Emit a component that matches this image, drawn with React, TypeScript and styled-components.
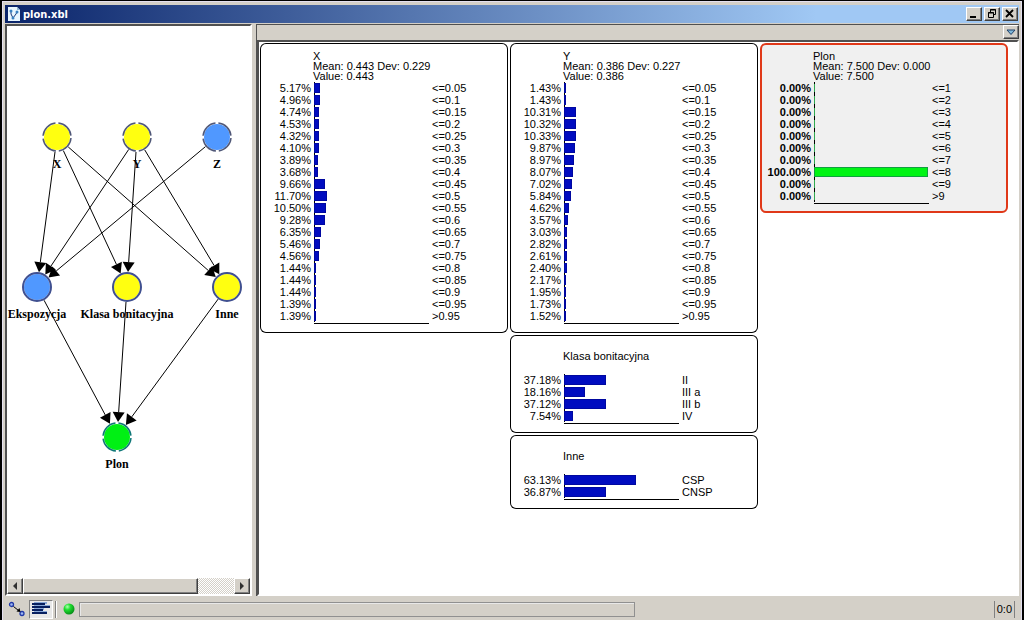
import React from "react";
import styled, { createGlobalStyle, css } from "styled-components";

const Global = createGlobalStyle`
  * { box-sizing: border-box; }
  body { margin: 0; background: #000; font-family: "Liberation Sans", Arial, sans-serif; font-size: 11px; color: #000; }
  button { font: inherit; color: inherit; padding: 0; margin: 0; }
`;

const raised = css`
  background: #d4d0c8;
  border: 1px solid;
  border-color: #fff #404040 #404040 #fff;
  box-shadow: inset -1px -1px 0 #808080;
`;

const Frame = styled.div`
  display: flex;
  flex-direction: column;
  min-height: 100vh;
  border: solid #000;
  border-width: 1px 2px 0;
`;

const Window = styled.div`
  flex: 1;
  display: flex;
  flex-direction: column;
  background: #d4d0c8;
  border: 1px solid #e4e0f0;
  border-bottom: 0;
  padding: 3px 2px 0;
`;

const TitleBar = styled.header`
  display: flex;
  align-items: center;
  height: 18px;
  padding: 0 1px 0 2px;
  gap: 2px;
  background: linear-gradient(to right, #0a246a, #a0c8f4 80%);
`;

const Title = styled.h1`
  flex: 1;
  margin: 0;
  color: #fff;
  font: bold 11px/16px "DejaVu Sans Condensed", "Noto Sans", sans-serif;
  padding-top: 2px;
`;

const Caption = styled.div`
  display: flex;
  gap: 2px;
`;

const CaptionButton = styled.button`
  ${raised}
  width: 16px;
  height: 14px;
  display: grid;
  place-items: center;
`;

const Body = styled.main`
  flex: 1;
  display: flex;
  gap: 4px;
  margin-top: 1px;
`;

const Sunken = css`
  border: solid;
  border-width: 2px;
  border-color: #505050 #fff #fff #505050;
`;

const NetworkPane = styled.section`
  ${Sunken}
  width: 247px;
  display: flex;
  flex-direction: column;
  background: #fff;
`;

const Canvas = styled.svg`
  flex: 1;
  display: block;
  width: 243px;
  min-height: 450px;
`;

const NodeLabel = styled.text`
  font: bold 12px "Liberation Serif", "Times New Roman", serif;
  text-anchor: middle;
`;

const ScrollBar = styled.div`
  display: flex;
  height: 16px;
  background: repeating-conic-gradient(#fff 0 25%, #d4d0c8 0 50%) 0 0 / 2px 2px;
`;

const ScrollButton = styled.button`
  ${raised}
  width: 16px;
  display: grid;
  place-items: center;
`;

const ScrollThumb = styled.div`
  ${raised}
  width: 175px;
`;

const ScrollTrack = styled.div`
  flex: 1;
`;

const MonitorPane = styled.section`
  flex: 1;
  min-width: 0;
  display: flex;
  flex-direction: column;
  border-left: 1px solid #505050;
  border-top: 1px solid #505050;
`;

const MonitorBar = styled.div`
  display: flex;
  justify-content: flex-end;
  height: 15px;
`;

const MenuButton = styled.button`
  ${raised}
  width: 16px;
  height: 14px;
  display: grid;
  place-items: center;
`;

const Monitors = styled.div`
  ${Sunken}
  flex: 1;
  display: flex;
  align-items: flex-start;
  gap: 2px;
  padding: 1px;
  background: #fff;
`;

const Column = styled.div`
  display: flex;
  flex-direction: column;
  gap: 2px;
`;

const Card = styled.article<{ $evidence?: boolean }>`
  width: 248px;
  padding: 8px 0 11px;
  border-radius: 6px;
  background: ${(p) => (p.$evidence ? "#f0f0f0" : "#fff")};
  box-shadow: inset 0 0 0 ${(p) => (p.$evidence ? "2px #e03818" : "1px #000")};
`;

const CardHeader = styled.header<{ $single: boolean }>`
  display: flex;
  flex-direction: column;
  justify-content: center;
  height: 31px;
  padding: 0 0 ${(p) => (p.$single ? 5 : 1)}px 53px;
  line-height: 10px;
`;

const CardTitle = styled.h2`
  margin: 0;
  font: inherit;
`;

const Table = styled.table`
  width: 100%;
  table-layout: fixed;
  border-collapse: collapse;
`;

const Row = styled.tr`
  height: 12px;
`;

const Percent = styled.td<{ $bold?: boolean }>`
  width: 54px;
  padding: 0 3px 0 0;
  text-align: right;
  line-height: 12px;
  font-weight: ${(p) => (p.$bold ? "bold" : "normal")};
`;

const BarCell = styled.td`
  width: 115px;
  padding: 0;
`;

const State = styled.th`
  padding: 0 0 0 3px;
  text-align: left;
  font-weight: normal;
  line-height: 12px;
`;

const Plot = styled.div<{ $green?: boolean; $last: boolean }>`
  height: 12px;
  padding: 1px 0;
  background: linear-gradient(${(p) => (p.$green ? "#000 0 2px, #30a850 2px 10px, #000 10px" : "#000, #000")}) 0 0 / 1px 100% no-repeat;
  box-shadow: ${(p) => (p.$last ? `0 1px 0 ${p.$green ? "#f0f0f0" : "#fff"}, 0 2px 0 #000` : "none")};
`;

const Bar = styled.div<{ $green?: boolean }>`
  height: 10px;
  background: ${(p) => (p.$green ? "#00f414" : "#000cc0")};
  border: 1px solid ${(p) => (p.$green ? "#10a040" : "#0008a0")};
`;

const StatusBar = styled.footer`
  display: flex;
  align-items: center;
  height: 24px;
  margin-top: 1px;
`;

const ToolButton = styled.button<{ $pressed?: boolean }>`
  width: 24px;
  height: 19px;
  display: grid;
  place-items: center;
  border: 1px solid;
  border-color: ${(p) => (p.$pressed ? "#808080 #fff #fff #808080" : "transparent")};
  background: ${(p) => (p.$pressed ? "#e8e8e8" : "transparent")};
`;

const Divider = styled.div`
  width: 2px;
  height: 17px;
  margin: 0 6px 0 2px;
  border-left: 1px solid #808080;
  border-right: 1px solid #fff;
`;

const Message = styled.output`
  flex: 0 1 556px;
  height: 15px;
  margin-left: 4px;
  border: 1px solid #909090;
  box-shadow: inset 1px 1px 0 #e8e8e8;
`;

const Position = styled.output`
  height: 17px;
  margin: 0 4px 0 auto;
  padding: 0 2px;
  border: solid #808080;
  border-width: 0 1px;
  line-height: 17px;
`;

type Point = { id: string; x: number; y: number; color: string; dashed?: boolean };

const nodes: Point[] = [
  { id: "X", x: 57, y: 137, color: "#ffff10", dashed: true },
  { id: "Y", x: 137, y: 137, color: "#ffff10", dashed: true },
  { id: "Z", x: 217, y: 137, color: "#5098ff", dashed: true },
  { id: "Ekspozycja", x: 37, y: 287, color: "#5098ff" },
  { id: "Klasa bonitacyjna", x: 127, y: 287, color: "#ffff10" },
  { id: "Inne", x: 227, y: 287, color: "#ffff10" },
  { id: "Plon", x: 117, y: 437, color: "#00f014", dashed: true },
];

const edges: [number, number][] = [
  [0, 3], [0, 4], [0, 5], [1, 3], [1, 4], [1, 5], [2, 3], [3, 6], [4, 6], [5, 6],
];

function Edge({ from, to }: { from: Point; to: Point }) {
  const dx = to.x - from.x;
  const dy = to.y - from.y;
  const len = Math.hypot(dx, dy);
  const ux = dx / len;
  const uy = dy / len;
  const tx = to.x - ux * 15;
  const ty = to.y - uy * 15;
  const bx = tx - ux * 10;
  const by = ty - uy * 10;
  return (
    <g>
      <line x1={from.x + ux * 15} y1={from.y + uy * 15} x2={bx} y2={by} stroke="#000" />
      <polygon points={`${tx},${ty} ${bx - uy * 6},${by + ux * 6} ${bx + uy * 6},${by - ux * 6}`} />
    </g>
  );
}

function Network() {
  return (
    <Canvas viewBox="7 26 243 552" preserveAspectRatio="xMinYMin slice" role="img" aria-label="Network">
      {nodes.map((n) => (
        <NodeLabel key={n.id} x={n.x} y={n.y + 31}>{n.id}</NodeLabel>
      ))}
      {edges.map(([a, b]) => (
        <Edge key={`${a}-${b}`} from={nodes[a]} to={nodes[b]} />
      ))}
      {nodes.map((n) => (
        <g key={n.id}>
          <circle cx={n.x} cy={n.y} r={13} fill={n.color} />
          <circle
            cx={n.x}
            cy={n.y}
            r={14}
            fill="none"
            stroke={n.id === "Plon" ? "#107878" : n.dashed ? "#505878" : "#405090"}
            strokeWidth={n.dashed ? 1.5 : 2}
            strokeDasharray={n.dashed ? "18.99 3" : undefined}
            strokeDashoffset={-1}
          />
        </g>
      ))}
    </Canvas>
  );
}

type Item = [number, string];

function Monitor({ name, stats, items, evidence }: { name: string; stats?: [string, string]; items: Item[]; evidence?: boolean }) {
  return (
    <Card $evidence={evidence}>
      <CardHeader $single={!stats}>
        <CardTitle>{name}</CardTitle>
        {stats?.map((s) => <div key={s}>{s}</div>)}
      </CardHeader>
      <Table aria-label={name}>
        <tbody>
          {items.map(([p, label], i) => (
            <Row key={label}>
              <Percent $bold={evidence}>{p.toFixed(2)}%</Percent>
              <BarCell>
                <Plot $green={evidence} $last={i === items.length - 1}>
                  {p > 0 && <Bar $green={evidence} style={{ width: Math.round(p * 1.14) }} />}
                </Plot>
              </BarCell>
              <State scope="row">{label}</State>
            </Row>
          ))}
        </tbody>
      </Table>
    </Card>
  );
}

const bins = Array.from({ length: 20 }, (_, i) => (i === 19 ? ">0.95" : `<=${(i + 1) * 5 / 100}`));
const withBins = (values: number[]): Item[] => values.map((v, i) => [v, bins[i]]);

const xItems = withBins([5.17, 4.96, 4.74, 4.53, 4.32, 4.1, 3.89, 3.68, 9.66, 11.7, 10.5, 9.28, 6.35, 5.46, 4.56, 1.44, 1.44, 1.44, 1.39, 1.39]);
const yItems = withBins([1.43, 1.43, 10.31, 10.32, 10.33, 9.87, 8.97, 8.07, 7.02, 5.84, 4.62, 3.57, 3.03, 2.82, 2.61, 2.4, 2.17, 1.95, 1.73, 1.52]);
const plonItems: Item[] = Array.from({ length: 10 }, (_, i) => [i === 7 ? 100 : 0, i === 9 ? ">9" : `<=${i + 1}`]);

export default function App() {
  return (
    <Frame>
      <Global />
      <Window>
        <TitleBar>
          <svg width="14" height="16" viewBox="0 0 14 16" aria-hidden="true">
            <path d="M1 1h9l3 3v11H1z" fill="#e8f6ff" />
            <path d="M10 1v3h3" fill="#90b8d8" />
            <path d="M4 5v3l2 4 3-4 1-2" fill="none" stroke="#183878" />
            <circle cx="4" cy="5" r="1.5" fill="#3880c0" />
            <circle cx="10" cy="6" r="1.5" fill="#3880c0" />
            <circle cx="6" cy="12" r="1.5" fill="#3880c0" />
          </svg>
          <Title>plon.xbl</Title>
          <Caption>
            <CaptionButton aria-label="Minimize">
              <svg width="12" height="10"><path d="M2 7h6v2H2z" /></svg>
            </CaptionButton>
            <CaptionButton aria-label="Restore">
              <svg width="12" height="10" fill="none" stroke="#000">
                <path d="M4.5 3V.5h5v5H8M4 1h6M2.5 3.5h5v5h-5zM2 4h6" />
              </svg>
            </CaptionButton>
            <CaptionButton aria-label="Close">
              <svg width="12" height="10"><path d="M2 1l7 7M9 1l-7 7" stroke="#000" strokeWidth="1.8" /></svg>
            </CaptionButton>
          </Caption>
        </TitleBar>
        <Body>
          <NetworkPane>
            <Network />
            <ScrollBar>
              <ScrollButton aria-label="Scroll left"><svg width="6" height="8"><path d="M5 0v8L1 4z" fill="#303030" /></svg></ScrollButton>
              <ScrollThumb />
              <ScrollTrack />
              <ScrollButton aria-label="Scroll right"><svg width="6" height="8"><path d="M1 0v8l4-4z" fill="#303030" /></svg></ScrollButton>
            </ScrollBar>
          </NetworkPane>
          <MonitorPane>
            <MonitorBar>
              <MenuButton aria-label="Monitor menu">
                <svg width="10" height="8"><path d="M1 2h8L5 6.500z" fill="#80b8d8" stroke="#204068" /></svg>
              </MenuButton>
            </MonitorBar>
            <Monitors>
              <Column>
                <Monitor name="X" stats={["Mean: 0.443 Dev: 0.229", "Value: 0.443"]} items={xItems} />
              </Column>
              <Column>
                <Monitor name="Y" stats={["Mean: 0.386 Dev: 0.227", "Value: 0.386"]} items={yItems} />
                <Monitor name="Klasa bonitacyjna" items={[[37.18, "II"], [18.16, "III a"], [37.12, "III b"], [7.54, "IV"]]} />
                <Monitor name="Inne" items={[[63.13, "CSP"], [36.87, "CNSP"]]} />
              </Column>
              <Column>
                <Monitor name="Plon" stats={["Mean: 7.500 Dev: 0.000", "Value: 7.500"]} items={plonItems} evidence />
              </Column>
            </Monitors>
          </MonitorPane>
        </Body>
        <StatusBar>
          <ToolButton aria-label="Show network">
            <svg width="18" height="16" viewBox="0 0 18 16">
              <circle cx="3.500" cy="3.500" r="2" fill="#a0b8f0" stroke="#2038a8" strokeWidth="1.3" />
              <circle cx="14" cy="12.500" r="2" fill="#a0b8f0" stroke="#2038a8" strokeWidth="1.3" />
              <path d="M5.500 5.500l5 4" stroke="#000" />
              <path d="M12.500 11l-4-.5 3-3.500z" />
            </svg>
          </ToolButton>
          <ToolButton $pressed aria-label="Show monitors">
            <svg width="20" height="14" viewBox="0 0 20 14">
              <path d="M3 0h13v2H3zM3 3h16v2H3zM3 6h10v2H3zM3 9h13v2H3z" fill="#88a8d8" />
              <path d="M1 1h13v2H1zM1 4h18v2H1zM1 7h11v2H1zM1 10h15v2H1z" fill="#082060" />
            </svg>
          </ToolButton>
          <Divider />
          <svg width="12" height="12" aria-hidden="true">
            <defs>
              <radialGradient id="led" cx=".35" cy=".3" r=".7">
                <stop offset="0" stopColor="#b0ffb0" />
                <stop offset=".4" stopColor="#20e030" />
                <stop offset="1" stopColor="#089018" />
              </radialGradient>
            </defs>
            <circle cx="6" cy="6" r="5.500" fill="url(#led)" />
          </svg>
          <Message aria-label="Status" />
          <Position aria-label="Position">0:0</Position>
        </StatusBar>
      </Window>
    </Frame>
  );
}
